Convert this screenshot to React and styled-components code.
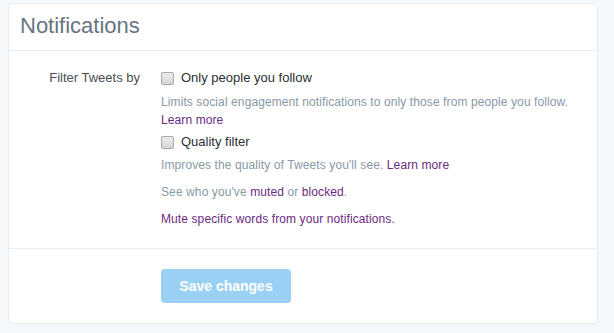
import styled, { createGlobalStyle } from "styled-components";

const GlobalStyle = createGlobalStyle`
  html, body {
    margin: 0;
    padding: 0;
    background: #f5f8fa;
    font-family: "Liberation Sans", Arial, sans-serif;
  }
`;

const Page = styled.div`
  padding: 3px 0 0 8px;
  height: 330px;
  box-sizing: border-box;
`;

const Card = styled.div`
  width: 590px;
  height: 321px;
  box-sizing: border-box;
  background: #ffffff;
  border: 1px solid #e6ecf0;
  border-radius: 5px;
  display: flex;
  flex-direction: column;
`;

const Header = styled.div`
  height: 47px;
  box-sizing: border-box;
  padding: 9px 0 0 11px;
  border-bottom: 1px solid #e6ecf0;
  h2 {
    margin: 0;
    font-size: 22px;
    line-height: 26px;
    font-weight: normal;
    color: #66757f;
  }
`;

const Section = styled.div`
  display: grid;
  grid-template-columns: 131px 1fr;
  column-gap: 21px;
  padding: 18px 0 20px;
  border-bottom: 1px solid #e6ecf0;
`;

const Label = styled.div`
  text-align: right;
  font-size: 13px;
  line-height: 18px;
  color: #4a4f53;
`;

const Controls = styled.div`
  display: flex;
  flex-direction: column;
`;

const CheckRow = styled.label`
  display: flex;
  align-items: center;
  gap: 7px;
  font-size: 13px;
  line-height: 18px;
  color: #292f33;
`;

const Box = styled.span`
  width: 11px;
  height: 11px;
  border: 1px solid #a9a9a9;
  border-radius: 2px;
  background: linear-gradient(#ececec, #d6d6d6);
  display: inline-block;
`;

const Help = styled.p`
  margin: ${(p) => p.$margin || "0"};
  font-size: 12px;
  line-height: 18px;
  color: #8899a6;
  letter-spacing: 0.1px;
`;

const Link = styled.a`
  color: #6b2a7f;
  text-decoration: none;
`;

const Footer = styled.div`
  padding: 20px 0 0 152px;
`;

const SaveButton = styled.button`
  width: 130px;
  height: 34px;
  border: none;
  border-radius: 4px;
  background: #9ad0f4;
  color: #ffffff;
  font-family: "Liberation Sans", Arial, sans-serif;
  font-size: 14px;
  font-weight: bold;
`;

export default function App() {
  return (
    <>
      <GlobalStyle />
      <Page>
        <Card>
          <Header>
            <h2>Notifications</h2>
          </Header>
          <Section>
            <Label>Filter Tweets by</Label>
            <Controls>
              <CheckRow>
                <Box />
                Only people you follow
              </CheckRow>
              <Help $margin="6px 0 4px">
                Limits social engagement notifications to only those from people you follow.
                <br />
                <Link href="#">Learn more</Link>
              </Help>
              <CheckRow>
                <Box />
                Quality filter
              </CheckRow>
              <Help $margin="5px 0 9px">
                Improves the quality of Tweets you'll see. <Link href="#">Learn more</Link>
              </Help>
              <Help $margin="0 0 9px">
                See who you've <Link href="#">muted</Link> or <Link href="#">blocked</Link>.
              </Help>
              <Help>
                <Link href="#">Mute specific words from your notifications.</Link>
              </Help>
            </Controls>
          </Section>
          <Footer>
            <SaveButton>Save changes</SaveButton>
          </Footer>
        </Card>
      </Page>
    </>
  );
}
